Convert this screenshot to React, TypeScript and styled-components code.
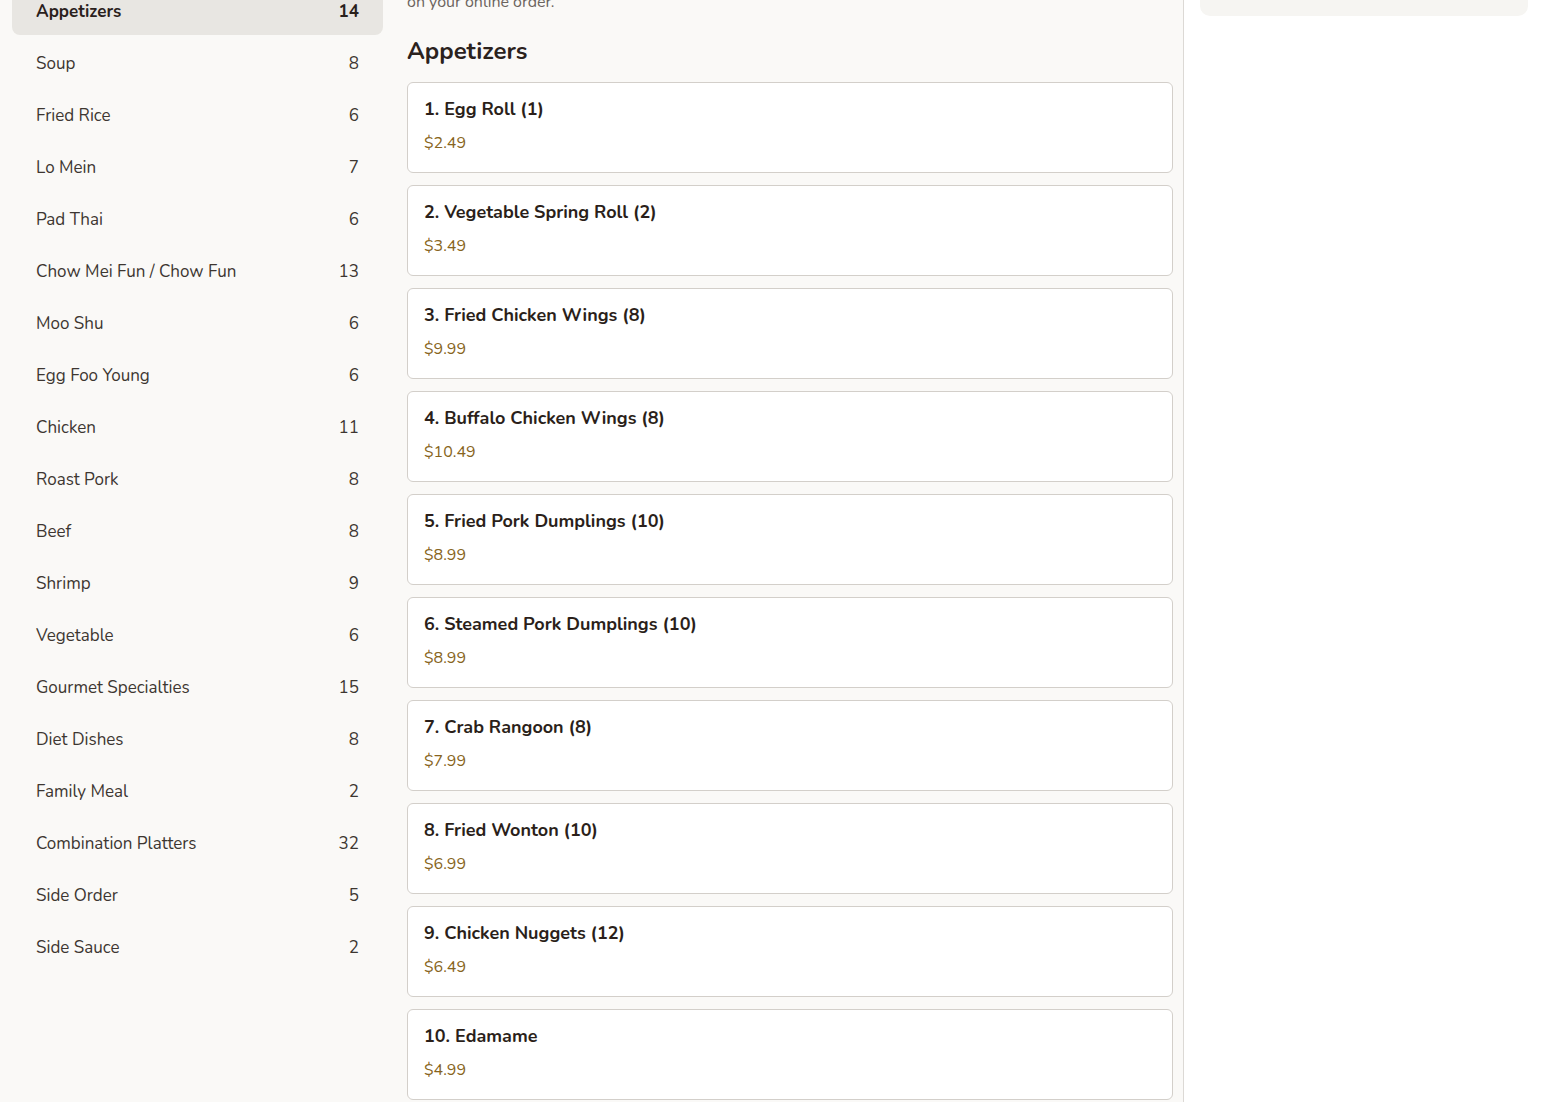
import React from 'react';
import styled, {createGlobalStyle} from 'styled-components';

const categories: [string, number][] = [
  ['Appetizers', 14],
  ['Soup', 8],
  ['Fried Rice', 6],
  ['Lo Mein', 7],
  ['Pad Thai', 6],
  ['Chow Mei Fun / Chow Fun', 13],
  ['Moo Shu', 6],
  ['Egg Foo Young', 6],
  ['Chicken', 11],
  ['Roast Pork', 8],
  ['Beef', 8],
  ['Shrimp', 9],
  ['Vegetable', 6],
  ['Gourmet Specialties', 15],
  ['Diet Dishes', 8],
  ['Family Meal', 2],
  ['Combination Platters', 32],
  ['Side Order', 5],
  ['Side Sauce', 2],
];

const items: [string, string][] = [
  ['1. Egg Roll (1)', '$2.49'],
  ['2. Vegetable Spring Roll (2)', '$3.49'],
  ['3. Fried Chicken Wings (8)', '$9.99'],
  ['4. Buffalo Chicken Wings (8)', '$10.49'],
  ['5. Fried Pork Dumplings (10)', '$8.99'],
  ['6. Steamed Pork Dumplings (10)', '$8.99'],
  ['7. Crab Rangoon (8)', '$7.99'],
  ['8. Fried Wonton (10)', '$6.99'],
  ['9. Chicken Nuggets (12)', '$6.49'],
  ['10. Edamame', '$4.99'],
];

const App: React.FC = () => {
  return (
    <>
      <GlobalStyle/>
      <Page>
        <Sidebar>
          <CategoryList>
            {categories.map(([name, count], i) => (
              <Category key={name} $active={i === 0}>
                <span>{name}</span>
                <span>{count}</span>
              </Category>
            ))}
          </CategoryList>
        </Sidebar>
        <Menu>
          <Intro>on your online order.</Intro>
          <SectionTitle>Appetizers</SectionTitle>
          <ItemList>
            {items.map(([name, price]) => (
              <ItemCard key={name}>
                <ItemName>{name}</ItemName>
                <ItemPrice>{price}</ItemPrice>
              </ItemCard>
            ))}
          </ItemList>
        </Menu>
        <CartColumn>
          <CartBox/>
        </CartColumn>
      </Page>
    </>
  );
}

const GlobalStyle = createGlobalStyle`
  body {
    margin: 0;
    background: #faf9f7;
    font-family: 'Nunito', 'Lato', 'Noto Sans', sans-serif;
    color: #2b221d;
    -webkit-font-smoothing: antialiased;
  }
`;

const Page = styled.div`
  display: grid;
  grid-template-columns: 395px 789px 1fr;
  height: 100vh;
  overflow: hidden;
`

const Sidebar = styled.aside`
  padding: 0 12px;
`

const CategoryList = styled.nav`
  display: flex;
  flex-direction: column;
  gap: 4px;
  margin-top: -13px;
`

const Category = styled.div<{ $active?: boolean }>`
  display: flex;
  align-items: center;
  justify-content: space-between;
  height: 48px;
  padding: 0 24px;
  border-radius: 8px;
  font-size: 17px;
  color: ${({$active}) => $active ? '#2a211c' : '#3d3631'};
  font-weight: ${({$active}) => $active ? 700 : 400};
  background: ${({$active}) => $active ? '#e8e6e2' : 'transparent'};
`

const Menu = styled.main`
  padding: 0 10px 0 12px;
  border-right: 1px solid #dcd9d5;
  box-sizing: border-box;
`

const Intro = styled.p`
  margin: -10px 0 0;
  font-size: 16px;
  line-height: 24px;
  color: #6b645e;
`

const SectionTitle = styled.h2`
  margin: 21px 0 15px;
  font-size: 24px;
  line-height: 32px;
  font-weight: 700;
  color: #2b221d;
`

const ItemList = styled.div`
  display: flex;
  flex-direction: column;
  gap: 12px;
`

const ItemCard = styled.div`
  display: flex;
  flex-direction: column;
  gap: 10px;
  padding: 14px 16px 17px;
  background: #ffffff;
  border: 1px solid #d3cfca;
  border-radius: 6px;
`

const ItemName = styled.div`
  font-size: 18px;
  line-height: 24px;
  font-weight: 700;
  color: #2b1f1a;
`

const ItemPrice = styled.div`
  font-size: 16px;
  line-height: 24px;
  color: #876420;
`

const CartColumn = styled.aside`
  background: #ffffff;
  padding: 0 16px;
`

const CartBox = styled.div`
  height: 120px;
  margin-top: -104px;
  border-radius: 10px;
  background: #f6f5f2;
`

export default App;
